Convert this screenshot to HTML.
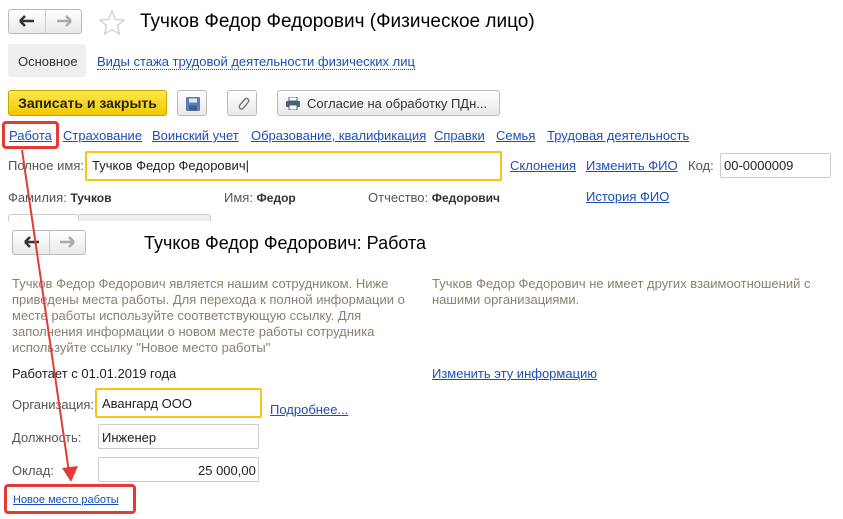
<!DOCTYPE html><html><head><meta charset="utf-8"><style>
body{margin:0;width:843px;height:519px;background:#fff;font-family:"Liberation Sans",Arial,sans-serif;font-size:13px;color:#333;position:relative;overflow:hidden}
.a{position:absolute;white-space:nowrap}
.l{color:#1a4fb8;text-decoration:underline}
.btn{position:absolute;border:1px solid #bbb;border-radius:3px;background:linear-gradient(#fff,#e9e9e9);box-sizing:border-box}
.inp{position:absolute;border:1px solid #ccc;border-radius:2px;box-sizing:border-box;background:#fff}
.g{color:#8a8070}
</style></head><body>
<div class="btn" style="left:8px;top:9px;width:74px;height:25px"></div>
<div class="a" style="left:45px;top:10px;width:1px;height:23px;background:#ccc"></div>
<svg class="a" style="left:19px;top:15px" width="16" height="12"><path d="M1 6H15M1 6L6 1M1 6L6 11" stroke="#333" stroke-width="2.5" fill="none"/></svg>
<svg class="a" style="left:56px;top:15px" width="16" height="12"><path d="M1 6H15M15 6L10 1M15 6L10 11" stroke="#aaa" stroke-width="2.5" fill="none"/></svg>
<svg class="a" style="left:99px;top:10px" width="26" height="25"><path d="M13 1L16.5 9.5L25 10L18.5 15.5L20.5 24L13 19.5L5.5 24L7.5 15.5L1 10L9.5 9.5Z" fill="none" stroke="#ccc" stroke-width="1.2"/></svg>
<div class="a" style="left:140px;top:11px;font-size:19px;color:#000">Тучков Федор Федорович (Физическое лицо)</div>
<div class="a" style="left:8px;top:44px;width:78px;height:33px;background:#efefef;border-radius:3px"></div>
<div class="a" style="left:18px;top:54px">Основное</div>
<div class="a" style="left:97px;top:54px;color:#1a4fb8;border-bottom:1px dotted #1a4fb8">Виды стажа трудовой деятельности физических лиц</div>
<div class="a" style="left:8px;top:90px;width:159px;height:26px;background:linear-gradient(#ffe84a,#f2c800);border:1px solid #c9a800;border-radius:3px;box-sizing:border-box;font-weight:bold;color:#222;font-size:14px;text-align:center;line-height:24px">Записать и закрыть</div>
<div class="btn" style="left:177px;top:90px;width:30px;height:26px"><svg style="position:absolute;left:8px;top:6px" width="14" height="14"><rect x="0" y="0" width="14" height="14" rx="1" fill="#5a7fae"/><rect x="3" y="1.5" width="8" height="4" fill="#dfe8f2"/><rect x="3" y="8.5" width="8" height="5" fill="#3b5f8e"/></svg></div>
<div class="btn" style="left:227px;top:90px;width:30px;height:26px"><svg style="position:absolute;left:8px;top:5px" width="14" height="15"><path d="M9 3L4 9Q2.5 11 4 12.5Q5.5 14 7.5 12L12 6.5Q13.5 4.5 12 3Q10.5 1.5 8.5 3.5L3.5 9.5" fill="none" stroke="#777" stroke-width="1.4"/></svg></div>
<div class="btn" style="left:277px;top:90px;width:223px;height:26px"><svg style="position:absolute;left:8px;top:6px" width="14" height="13"><rect x="3" y="0" width="8" height="4" fill="#fff" stroke="#4a5f7a"/><rect x="0" y="4" width="14" height="6" rx="1" fill="#4a5f7a"/><rect x="3" y="8" width="8" height="5" fill="#fff" stroke="#4a5f7a"/></svg><span class="a" style="left:29px;top:5px;color:#333">Согласие на обработку ПДн...</span></div>
<div class="a l" style="left:9px;top:128px">Работа</div>
<div class="a l" style="left:63px;top:128px">Страхование</div>
<div class="a l" style="left:152px;top:128px">Воинский учет</div>
<div class="a l" style="left:251px;top:128px">Образование, квалификация</div>
<div class="a l" style="left:434px;top:128px">Справки</div>
<div class="a l" style="left:496px;top:128px">Семья</div>
<div class="a l" style="left:547px;top:128px">Трудовая деятельность</div>
<div class="a" style="left:2px;top:121px;width:57px;height:28px;border:3px solid #e23c35;border-radius:4px;box-sizing:border-box"></div>
<div class="a" style="left:8px;top:158px;color:#555">Полное имя:</div>
<div class="inp" style="left:85px;top:151px;width:417px;height:30px;border:2px solid #f5c518"></div>
<div class="a" style="left:92px;top:158px;color:#222">Тучков Федор Федорович|</div>
<div class="a l" style="left:510px;top:158px">Склонения</div>
<div class="a l" style="left:586px;top:158px">Изменить ФИО</div>
<div class="a" style="left:688px;top:158px;color:#555">Код:</div>
<div class="inp" style="left:720px;top:153px;width:111px;height:25px"></div>
<div class="a" style="left:724px;top:158px;color:#222">00-0000009</div>
<div class="a" style="left:8px;top:190px;color:#555">Фамилия: <b style="color:#333;font-size:12px">Тучков</b></div>
<div class="a" style="left:224px;top:190px;color:#555">Имя: <b style="color:#333;font-size:12px">Федор</b></div>
<div class="a" style="left:368px;top:190px;color:#555">Отчество: <b style="color:#333;font-size:12px">Федорович</b></div>
<div class="a l" style="left:586px;top:189px">История ФИО</div>
<div class="a" style="left:8px;top:214px;width:69px;height:6px;border:1px solid #ccc;border-bottom:none;border-radius:3px 3px 0 0"></div>
<div class="a" style="left:78px;top:214px;width:131px;height:6px;border:1px solid #ccc;border-bottom:none;background:#eee;border-radius:3px 3px 0 0"></div>
<div class="btn" style="left:12px;top:230px;width:74px;height:25px"></div>
<div class="a" style="left:49px;top:231px;width:1px;height:23px;background:#ccc"></div>
<svg class="a" style="left:24px;top:236px" width="16" height="12"><path d="M1 6H15M1 6L6 1M1 6L6 11" stroke="#333" stroke-width="2.5" fill="none"/></svg>
<svg class="a" style="left:59px;top:236px" width="16" height="12"><path d="M1 6H15M15 6L10 1M15 6L10 11" stroke="#aaa" stroke-width="2.5" fill="none"/></svg>
<div class="a" style="left:144px;top:233px;font-size:18px;color:#000">Тучков Федор Федорович: Работа</div>
<div class="a g" style="left:12px;top:276px;font-size:13px;line-height:16px;white-space:normal;width:405px">Тучков Федор Федорович является нашим сотрудником. Ниже приведены места работы. Для перехода к полной информации о месте работы используйте соответствующую ссылку. Для заполнения информации о новом месте работы сотрудника используйте ссылку "Новое место работы"</div>
<div class="a g" style="left:432px;top:276px;font-size:13px;line-height:16px;white-space:normal;width:390px">Тучков Федор Федорович не имеет других взаимоотношений с нашими организациями.</div>
<div class="a" style="left:12px;top:366px;color:#222">Работает с 01.01.2019 года</div>
<div class="a l" style="left:432px;top:366px">Изменить эту информацию</div>
<div class="a" style="left:12px;top:397px;color:#555">Организация:</div>
<div class="inp" style="left:95px;top:388px;width:167px;height:30px;border:2px solid #f5c518"></div>
<div class="a" style="left:102px;top:396px;color:#222">Авангард ООО</div>
<div class="a l" style="left:270px;top:402px">Подробнее...</div>
<div class="a" style="left:12px;top:430px;color:#555">Должность:</div>
<div class="inp" style="left:98px;top:424px;width:161px;height:25px"></div>
<div class="a" style="left:102px;top:430px;color:#222">Инженер</div>
<div class="a" style="left:12px;top:463px;color:#555">Оклад:</div>
<div class="inp" style="left:98px;top:457px;width:161px;height:25px"></div>
<div class="a" style="left:198px;top:463px;color:#222">25 000,00</div>
<div class="a l" style="left:13px;top:494px;font-size:11px">Новое место работы</div>
<div class="a" style="left:4px;top:484px;width:132px;height:30px;border:3px solid #e23c35;border-radius:4px;box-sizing:border-box"></div>
<svg class="a" style="left:0;top:0" width="843" height="519"><line x1="22" y1="150" x2="69" y2="472" stroke="#e23c35" stroke-width="2"/><polygon points="62,468 78,466 71,482" fill="#e23c35"/></svg>
</body></html>
